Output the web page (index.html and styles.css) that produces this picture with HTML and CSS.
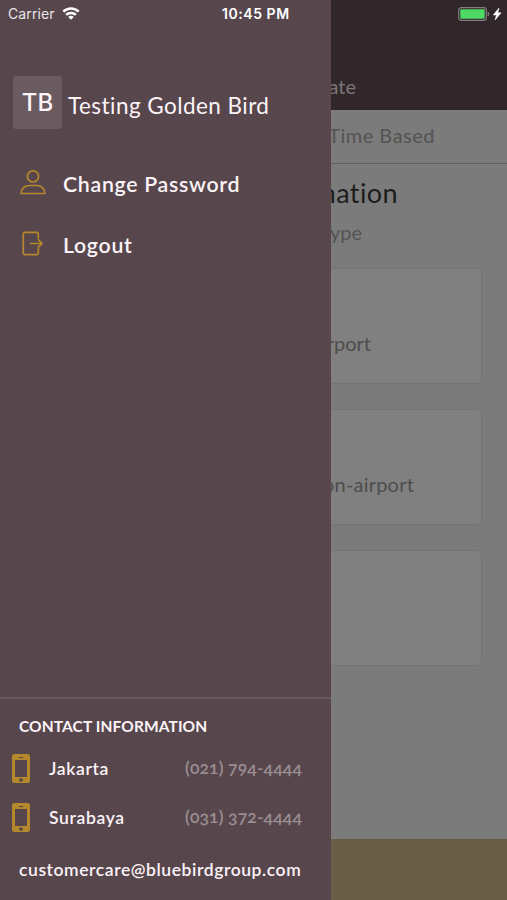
FILE: index.html
```html
<!DOCTYPE html>
<html lang="en">
<head>
    <meta charset="UTF-8">
    <title>Golden Bird</title>
    <link rel="stylesheet" href="styles.css">
</head>
<body>
    <div class="status-bar">
        <span class="carrier">Carrier</span>
        <svg class="wifi" width="18" height="13" viewBox="0 0 18 13" fill="none" stroke="#fff" stroke-width="2.5">
            <path d="M1.3 4.6a11 11 0 0 1 15.4 0M4.1 7.9a7 7 0 0 1 9.8 0"/>
            <path d="M9 12.8L6.2 10a4 4 0 0 1 5.6 0z" fill="#fff" stroke="none"/>
        </svg>
        <span class="time">10:45 PM</span>
        <svg class="battery" width="45" height="14" viewBox="0 0 45 14">
            <rect x=".7" y=".7" width="27.6" height="12.6" rx="2.6" fill="none" stroke="#817c7e" stroke-width="1.2"/>
            <rect x="2.3" y="2.3" width="24.4" height="9.4" rx="1" fill="#4cd964"/>
            <path d="M29.6 4.8q1.8.5 1.8 2.2t-1.8 2.2z" fill="#817c7e"/>
            <path d="M41 1l-5.8 7h3.2l-1.3 5 6-7.2h-3.3z" fill="#fff" stroke="#fff" stroke-width=".5"/>
        </svg>
    </div>

    <aside class="drawer">
        <div class="profile">
            <div class="avatar">TB</div>
            <div class="name">Testing Golden Bird</div>
        </div>

        <nav class="menu">
            <a class="menu-item">
                <svg width="26" height="26" viewBox="0 0 26 26" fill="none" stroke="#b5882c" stroke-width="1.7" stroke-linejoin="round">
                    <circle cx="13" cy="7.4" r="5.6"/>
                    <path d="M1.2 24.5c0-4.8 3.6-8 8-8h7.6c4.4 0 8 3.2 8 8z"/>
                </svg>
                <span>Change Password</span>
            </a>
            <a class="menu-item">
                <svg width="26" height="26" viewBox="0 0 26 26" fill="none" stroke="#b5882c" stroke-width="1.7" stroke-linecap="round" stroke-linejoin="round">
                    <path d="M18.3 8V4c0-1-.6-1.6-1.6-1.6H5C4 2.4 3.3 3 3.3 4v19c0 1 .7 1.600 1.700 1.600h11.700c1 0 1.600-.6 1.600-1.600v-4.500"/>
                    <path d="M10.5 13.5H22M18.4 9.8l3.7 3.7-3.7 3.7"/>
                </svg>
                <span>Logout</span>
            </a>
        </nav>

        <section class="contact">
            <h2>CONTACT INFORMATION</h2>
            <div class="contact-row">
                <svg width="18" height="29" viewBox="0 0 18 29">
                    <path fill="#b5882c" fill-rule="evenodd" d="M2.5 0h13Q18 0 18 2.5v24q0 2.5-2.5 2.5h-13Q0 29 0 26.5v-24Q0 0 2.5 0zM3 6v17h12V6zM6.8 3v.9h4.4V3zM9 24.2a1.8 1.8 0 1 0 .01 0z"/>
                </svg>
                <span class="city">Jakarta</span>
                <span class="phone">(021) 794-4444</span>
            </div>
            <div class="contact-row">
                <svg width="18" height="29" viewBox="0 0 18 29">
                    <path fill="#b5882c" fill-rule="evenodd" d="M2.5 0h13Q18 0 18 2.5v24q0 2.5-2.5 2.5h-13Q0 29 0 26.5v-24Q0 0 2.5 0zM3 6v17h12V6zM6.8 3v.9h4.4V3zM9 24.2a1.8 1.8 0 1 0 .01 0z"/>
                </svg>
                <span class="city">Surabaya</span>
                <span class="phone">(031) 372-4444</span>
            </div>
            <p class="email">customercare@bluebirdgroup.com</p>
        </section>
    </aside>

    <main class="page">
        <header class="page-header"><span>ate</span></header>
        <div class="tab"><span>Time Based</span></div>
        <h1><span>mation</span></h1>
        <p class="subtitle"><span>ype</span></p>
        <div class="cards">
            <div class="card airport"><span>rport</span></div>
            <div class="card non-airport"><span>on-airport</span></div>
            <div class="card"></div>
        </div>
        <footer class="page-footer"></footer>
    </main>
</body>
</html>
```
FILE: styles.css
```css
* {
    box-sizing: border-box;
}
body {
    margin: 0;
    display: grid;
    grid-template-columns: 331px 1fr;
    height: 900px;
    overflow: hidden;
    position: relative;
    font-family: Lato, sans-serif;
    font-variant-ligatures: none;
    background-color: #7b7b7b;
}
h1, h2, p {
    margin: 0;
    font-weight: normal;
}

/* status bar lies over the drawer and the page */
.status-bar {
    position: absolute;
    top: 0;
    left: 0;
    width: 507px;
    height: 27px;
    padding: 0 4px 0 8px;
    display: grid;
    grid-template-columns: 54px 160px 1fr 45px;
    align-items: center;
    font-family: Inter, sans-serif;
    font-size: 14px;
    color: #fff;
    z-index: 2;
}
.carrier {
    color: #e9e4e7;
    letter-spacing: 0.1px;
}
.time {
    font-weight: 600;
    font-size: 14px;
    letter-spacing: 0.55px;
}

.drawer {
    background-color: #57474d;
    color: #fcf3f7;
    display: flex;
    flex-direction: column;
    white-space: nowrap;
}
.profile {
    display: flex;
    align-items: center;
    margin: 76px 0 0 13px;
    gap: 6px;
}
.avatar {
    width: 49px;
    height: 53px;
    border-radius: 3px;
    background-color: #6a5b61;
    font-size: 24px;
    font-weight: 500;
    font-family: Inter, sans-serif;
    line-height: 53px;
    text-align: center;
}
.name {
    font-size: 22.5px;
    letter-spacing: 0.45px;
    padding-top: 5px;
}
.menu {
    padding: 25px 0 0 20px;
}
.menu-item {
    display: flex;
    align-items: center;
    height: 61px;
    gap: 17px;
    font-size: 21.3px;
    font-weight: 600;
    letter-spacing: 0.7px;
}
.menu-item span {
    margin-top: -2px;
}
.menu-item svg {
    margin-top: -5px;
}

.contact {
    margin-top: auto;
    height: 203px;
    border-top: 2px solid #66585d;
    padding: 17px 29px 0 12px;
}
.contact h2 {
    font-size: 15.5px;
    font-weight: bold;
    line-height: 20px;
    letter-spacing: 0.1px;
    padding-left: 7px;
    margin-bottom: 8px;
}
.contact-row {
    display: flex;
    align-items: center;
    height: 49px;
    font-size: 17.5px;
    font-weight: 600;
}
.city {
    margin-left: 19px;
    letter-spacing: 0.65px;
}
.phone {
    margin-left: auto;
    color: #9a8e93;
    font-variant-numeric: oldstyle-nums;
    letter-spacing: 0.15px;
}
.contact-row .phone {
    margin-top: -3px;
}
.email {
    font-size: 17.5px;
    font-weight: 600;
    line-height: 24px;
    letter-spacing: 0.58px;
    padding: 16px 0 0 7px;
}

.page {
    display: flex;
    flex-direction: column;
    overflow: hidden;
    background-color: #7b7b7b;
    color: #535353;
    white-space: nowrap;
    font-size: 20px;
}
.page-header, .tab, .page h1, .subtitle, .card {
    display: flex;
    justify-content: flex-end;
    align-items: center;
}
.page-header {
    height: 110px;
    flex-shrink: 0;
    padding: 62px 151px 0 0;
    background-color: #31272b;
    color: #7c7678;
}
.tab {
    height: 54px;
    padding: 0 72px 4px 0;
    border-bottom: 1px solid #626262;
    letter-spacing: 0.5px;
}
.page h1 {
    height: 56px;
    padding-right: 109px;
    color: #1c1c1c;
    font-size: 27px;
    letter-spacing: 0.4px;
}
.subtitle {
    height: 26px;
    padding: 0 145px 2px 0;
}
.cards {
    display: flex;
    flex-direction: column;
    gap: 25px;
    padding: 22px 25px 0 0;
}
.card {
    height: 116px;
    margin-left: -6px;
    padding-top: 34px;
    border: 1px solid #747474;
    border-radius: 5px;
    background-color: #808080;
    color: #4d4d4d;
}
.airport {
    padding-right: 110px;
}
.non-airport {
    padding-right: 67px;
    letter-spacing: 0.2px;
}
.page-footer {
    margin-top: auto;
    height: 61px;
    background-color: #695f48;
}
```
